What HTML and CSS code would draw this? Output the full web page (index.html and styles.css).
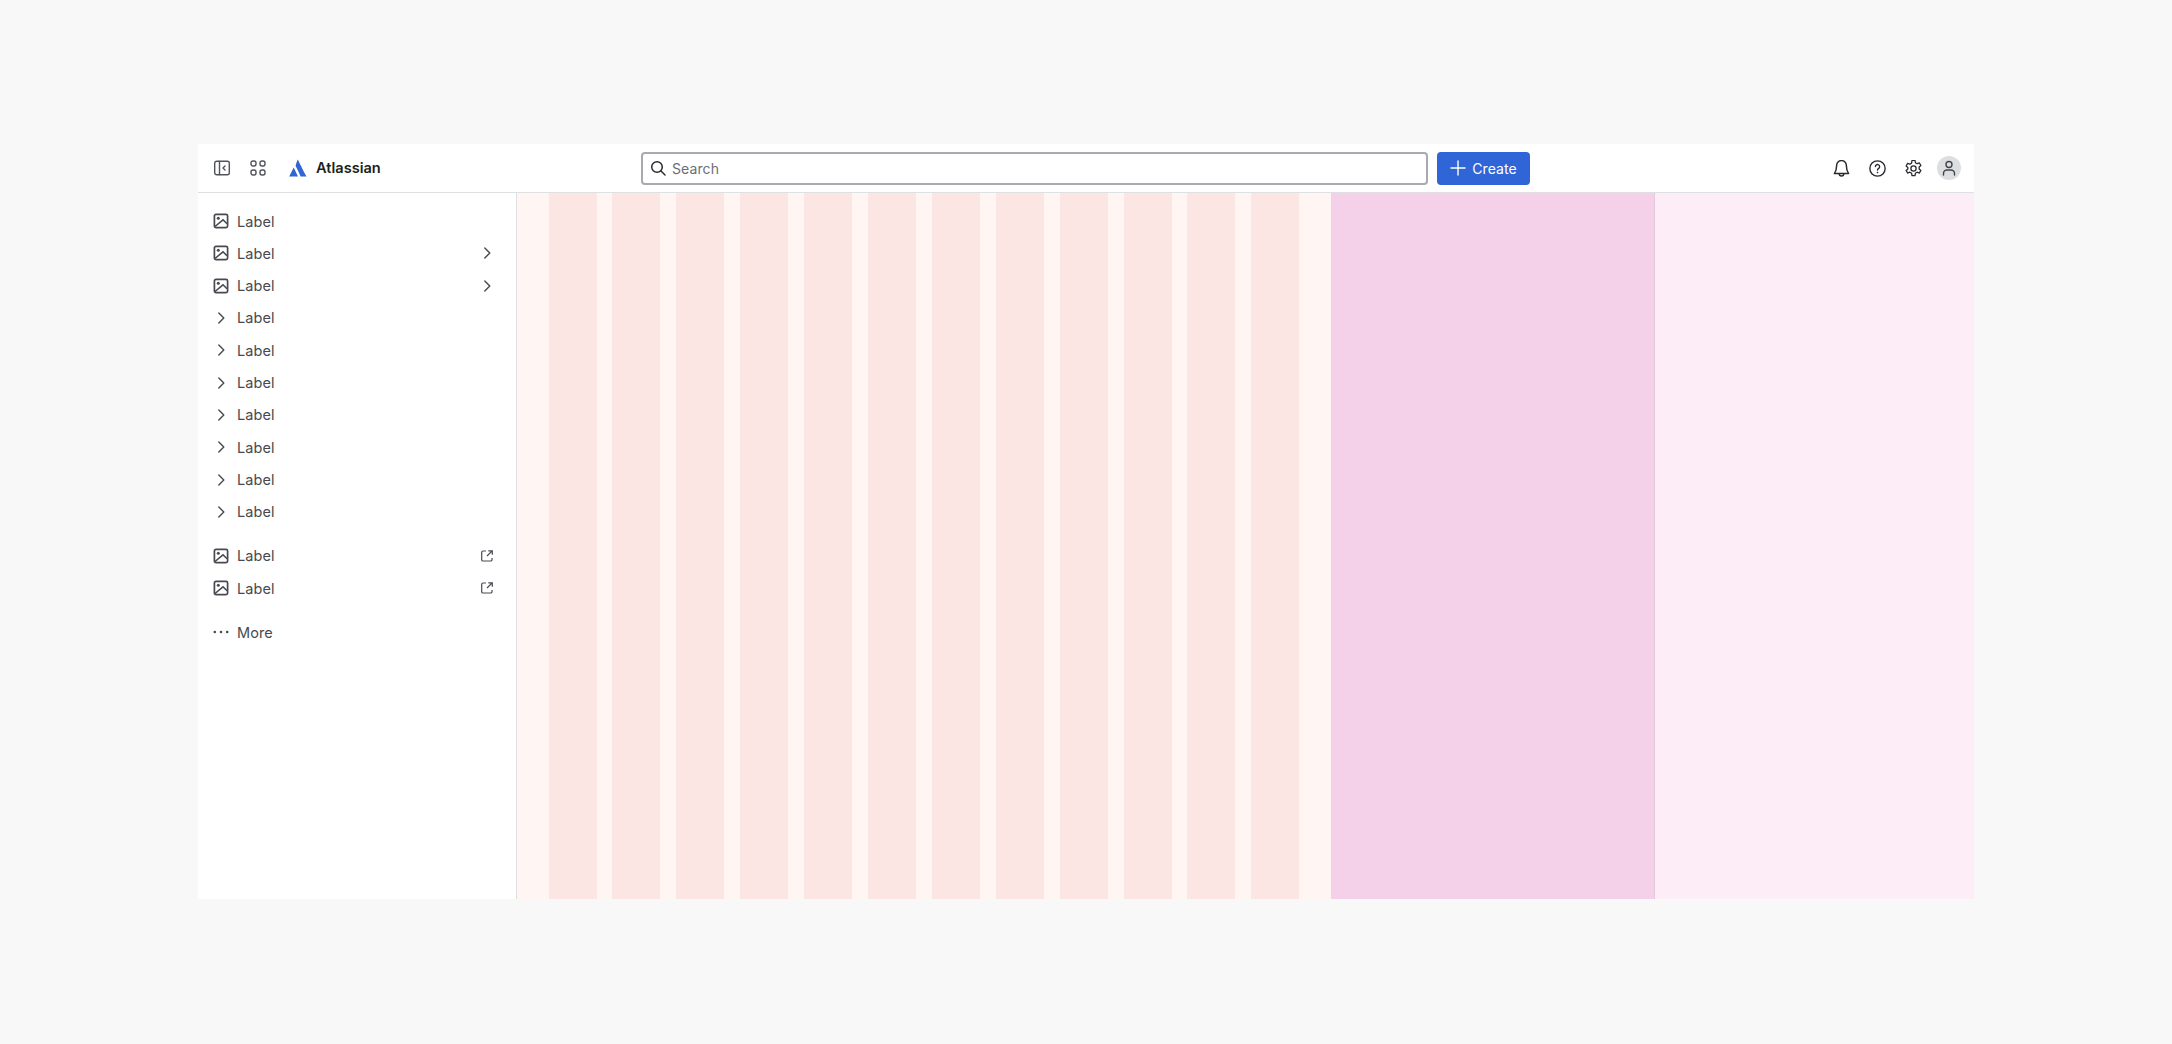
FILE: index.html
```html
<!DOCTYPE html>
<html lang="en">
<head>
  <meta charset="UTF-8" />
  <title>Layout grid</title>
  <link rel="stylesheet" href="styles.css">
</head>
<body>
<svg class="sprites" width="0" height="0">
  <symbol id="i-image" viewBox="0 0 16 16"><rect x="1.400" y="1.400" width="13.200" height="13.200" rx="1.600" fill="none" stroke="currentColor" stroke-width="1.700"/><circle cx="5.300" cy="5.300" r="1.500" fill="currentColor"/><path d="M2 13.500 10 6.800l4 4" fill="none" stroke="currentColor" stroke-width="1.600"/></symbol>
  <symbol id="i-chevron" viewBox="0 0 16 16"><path d="M5.800 3 10.800 8l-5 5" fill="none" stroke="currentColor" stroke-width="1.400" stroke-linecap="round" stroke-linejoin="round"/></symbol>
  <symbol id="i-external" viewBox="0 0 16 16"><path d="M7 3H4a1.300 1.300 0 0 0-1.300 1.300v7.400A1.300 1.300 0 0 0 4 13h7.700a1.300 1.300 0 0 0 1.300-1.300V10M9.300 2.800h4v4M13.200 2.900 8 8" fill="none" stroke="currentColor" stroke-width="1.200"/></symbol>
</svg>

<div class="frame">
  <header class="topbar">
    <div class="topbar-left">
      <button class="icon-btn">
        <svg width="16" height="16" viewBox="0 0 16 16" fill="none" stroke="currentColor" stroke-width="1.400"><rect x="0.700" y="1.200" width="14.600" height="13.600" rx="2"/><path d="M5.500 1.500v13M11 6 9 8l2 2" stroke-linecap="round" stroke-linejoin="round"/></svg>
      </button>
      <button class="icon-btn">
        <svg width="16" height="16" viewBox="0 0 16 16" fill="none" stroke="currentColor" stroke-width="1.400"><rect x="1" y="1" width="5" height="5" rx="2"/><rect x="10" y="1" width="5" height="5" rx="2"/><rect x="1" y="10" width="5" height="5" rx="2"/><rect x="10" y="10" width="5" height="5" rx="2"/></svg>
      </button>
      <div class="logo">
        <svg width="18" height="18" viewBox="0 0 18 18"><path d="M8.800 0.500c1.500 2.800 5 10.500 8.700 17H11.600C10.300 14 8.500 10.500 6.600 7c.4-2 1.200-4.500 2.200-6.500Z" fill="#2f65d6"/><path d="M4.700 8.500 9 17.500H0.200Z" fill="#2f65d6"/></svg>
        <span class="logo-text">Atlassian</span>
      </div>
    </div>
    <div class="search">
      <svg width="16" height="16" viewBox="0 0 16 16" fill="none" stroke="#292a2e" stroke-width="1.500"><circle cx="7" cy="7" r="5.300"/><path d="m11 11 4 4" stroke-linecap="round"/></svg>
      <span>Search</span>
    </div>
    <button class="create">
      <svg width="16" height="16" viewBox="0 0 16 16" fill="none" stroke="#fff" stroke-width="1.400"><path d="M8 1v14M1 8h14" stroke-linecap="round"/></svg>
      Create
    </button>
    <div class="topbar-right">
      <button class="icon-btn">
        <svg width="17" height="17" viewBox="0.700 0.500 14.600 15" fill="none" stroke="currentColor" stroke-width="1.300" stroke-linejoin="round"><path d="M8 1a4.300 4.300 0 0 0-4.300 4.300c0 3.700-.6 5.400-2 7.200h12.600c-1.400-1.800-2-3.500-2-7.200A4.300 4.300 0 0 0 8 1Z"/><path d="M6 12.700a2 2 0 0 0 4 0"/></svg>
      </button>
      <button class="icon-btn">
        <svg width="17" height="17" viewBox="0 0 16 16" fill="none" stroke="currentColor" stroke-width="1.300"><circle cx="8" cy="8" r="7.200"/><path d="M6 6.200a2 2 0 1 1 3.100 1.700c-.7.400-1.100.9-1.100 1.600" stroke-linecap="round"/><circle cx="8" cy="11.800" r="0.500" fill="currentColor" stroke-width="0.600"/></svg>
      </button>
      <button class="icon-btn">
        <svg width="17" height="17" viewBox="1 0.500 14 15" fill="none" stroke="currentColor" stroke-width="1.150" stroke-linejoin="round"><path d="M6.700 0.900h2.600l.4 2 1.500.9 2-.7 1.300 2.300-1.500 1.300v1.700l1.500 1.300-1.300 2.300-2-.7-1.500.9-.4 2H6.700l-.4-2-1.500-.9-2 .7-1.300-2.300 1.500-1.300V7.100L1.500 5.800 2.800 3.500l2 .7 1.500-.9Z"/><circle cx="8" cy="8" r="2.300"/></svg>
      </button>
      <button class="avatar">
        <svg width="16" height="16" viewBox="0 0 16 16" fill="none" stroke="currentColor" stroke-width="1.400"><circle cx="8" cy="4.500" r="3"/><path d="M2.500 15v-1.500A3.500 3.500 0 0 1 6 10h4a3.500 3.500 0 0 1 3.500 3.500V15" stroke-linecap="round"/></svg>
      </button>
    </div>
  </header>

  <div class="content">
    <nav class="sidebar">
      <div class="nav-group">
        <a class="nav-item"><svg class="lead"><use href="#i-image"/></svg>Label</a>
        <a class="nav-item"><svg class="lead"><use href="#i-image"/></svg>Label<svg class="trail"><use href="#i-chevron"/></svg></a>
        <a class="nav-item"><svg class="lead"><use href="#i-image"/></svg>Label<svg class="trail"><use href="#i-chevron"/></svg></a>
        <a class="nav-item"><svg class="lead"><use href="#i-chevron"/></svg>Label</a>
        <a class="nav-item"><svg class="lead"><use href="#i-chevron"/></svg>Label</a>
        <a class="nav-item"><svg class="lead"><use href="#i-chevron"/></svg>Label</a>
        <a class="nav-item"><svg class="lead"><use href="#i-chevron"/></svg>Label</a>
        <a class="nav-item"><svg class="lead"><use href="#i-chevron"/></svg>Label</a>
        <a class="nav-item"><svg class="lead"><use href="#i-chevron"/></svg>Label</a>
        <a class="nav-item"><svg class="lead"><use href="#i-chevron"/></svg>Label</a>
      </div>
      <div class="nav-group">
        <a class="nav-item"><svg class="lead"><use href="#i-image"/></svg>Label<svg class="trail"><use href="#i-external"/></svg></a>
        <a class="nav-item"><svg class="lead"><use href="#i-image"/></svg>Label<svg class="trail"><use href="#i-external"/></svg></a>
      </div>
      <div class="nav-group">
        <a class="nav-item">
          <svg class="lead" viewBox="0 0 16 16" fill="currentColor"><circle cx="1.800" cy="8" r="1.300"/><circle cx="8" cy="8" r="1.300"/><circle cx="14.200" cy="8" r="1.300"/></svg>More
        </a>
      </div>
    </nav>

    <main class="stage">
      <div class="grid-area">
        <div class="col"></div><div class="col"></div><div class="col"></div><div class="col"></div>
        <div class="col"></div><div class="col"></div><div class="col"></div><div class="col"></div>
        <div class="col"></div><div class="col"></div><div class="col"></div><div class="col"></div>
      </div>
      <div class="panel"></div>
      <div class="aside"></div>
    </main>
  </div>
</div>
</body>
</html>
```

FILE: styles.css
```css
* { box-sizing: border-box; }
body {
  margin: 0;
  height: 1044px;
  overflow: hidden;
  background: #f8f8f8;
  font-family: "Inter", "Liberation Sans", sans-serif;
  color: #42444a;
}
.sprites { position: absolute; }
button {
  border: none;
  background: none;
  padding: 0;
  font: inherit;
  color: inherit;
}

.frame {
  width: 1776px;
  height: 755px;
  margin: 144px auto 0;
  background: #fff;
  display: flex;
  flex-direction: column;
}

.topbar {
  height: 49px;
  flex: none;
  display: flex;
  align-items: center;
  border-bottom: 1px solid #dfe0e2;
}
.topbar-left {
  width: 443px;
  flex: none;
  display: flex;
  align-items: center;
  padding-left: 8px;
  gap: 4px;
}
.topbar-right {
  margin-left: auto;
  padding-right: 13px;
  display: flex;
  align-items: center;
  gap: 4px;
}
.icon-btn {
  width: 32px;
  height: 32px;
  display: flex;
  align-items: center;
  justify-content: center;
  color: #50535a;
}
.topbar-right .icon-btn { color: #292a2e; }
.logo {
  display: flex;
  align-items: center;
  gap: 9px;
  margin-left: 11px;
}
.logo-text {
  font-size: 14.600px;
  font-weight: 600;
  color: #1e1f21;
}
.search {
  width: 787px;
  height: 33px;
  display: flex;
  align-items: center;
  gap: 6px;
  padding-left: 7px;
  border: 2px solid #a8aab0;
  border-radius: 4px;
  font-size: 14px;
  letter-spacing: 0.100px;
  color: #6b6e76;
}
.create {
  width: 93px;
  height: 33px;
  margin-left: 9px;
  display: flex;
  align-items: center;
  justify-content: center;
  gap: 6px;
  background: #2f65d6;
  border-radius: 4px;
  color: #fff;
  font-size: 14px;
  letter-spacing: 0.100px;
}
.avatar {
  width: 24px;
  height: 24px;
  margin-left: 4px;
  display: flex;
  align-items: center;
  justify-content: center;
  border-radius: 50%;
  background: #dddee1;
  color: #42444a;
}

.content {
  flex: 1;
  display: flex;
  min-height: 0;
}
.sidebar {
  width: 319px;
  flex: none;
  padding: 12px 11px;
  display: flex;
  flex-direction: column;
  gap: 12px;
  border-right: 1px solid #dfe0e2;
}
.nav-group {
  display: flex;
  flex-direction: column;
  gap: 0.330px;
}
.nav-item {
  height: 32px;
  display: flex;
  align-items: center;
  font-size: 14.500px;
  letter-spacing: 0.100px;
  color: #484a50;
}
.lead {
  width: 16px;
  height: 16px;
  margin: 0 8px 0 4px;
  flex: none;
}
.trail {
  width: 16px;
  height: 16px;
  margin-left: auto;
  margin-right: 10px;
  flex: none;
}

.stage {
  flex: 1;
  display: flex;
}
.grid-area {
  width: 814px;
  flex: none;
  display: flex;
  gap: 15.900px;
  padding-left: 31.500px;
  background: #fff5f3;
}
.col {
  width: 48px;
  background: #fbe6e4;
}
.panel {
  width: 324px;
  flex: none;
  background: #f4d1e9;
  border-right: 1px solid #e4c8dc;
}
.aside {
  flex: 1;
  background: #fdedf6;
}
```
